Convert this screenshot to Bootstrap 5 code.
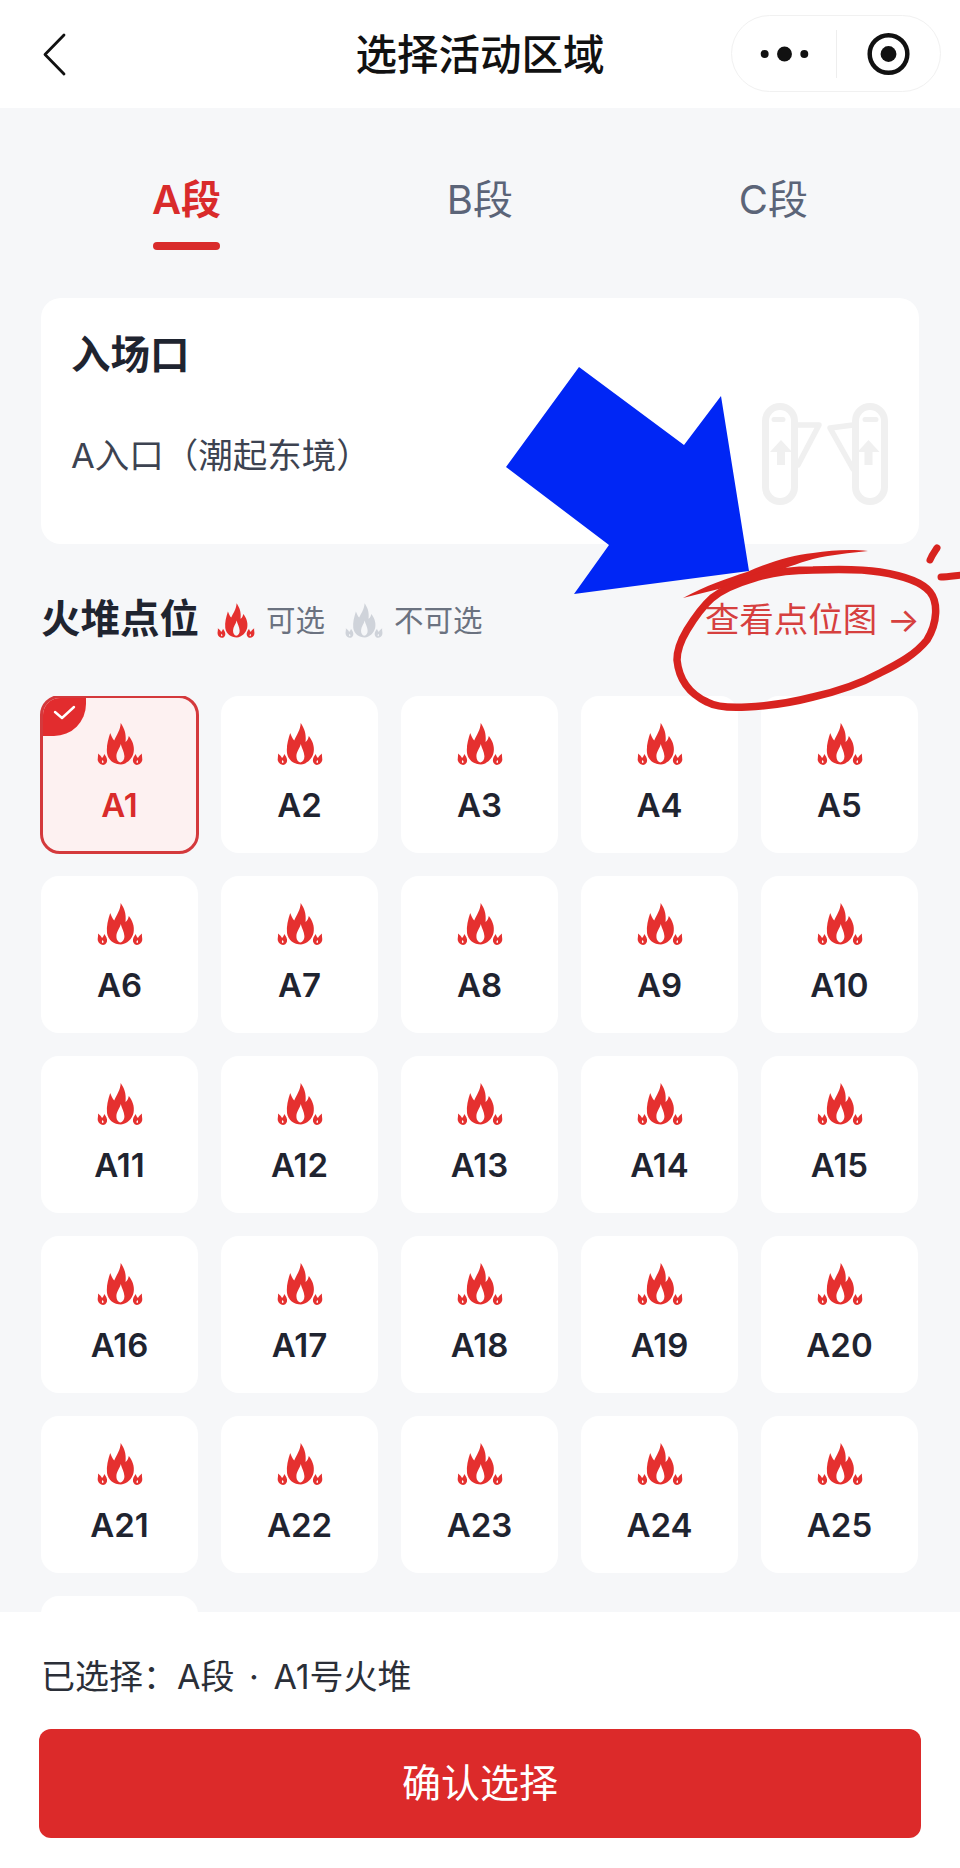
<!DOCTYPE html>
<html lang="zh-CN">
<head>
  <meta charset="UTF-8" />
  <meta name="viewport" content="width=device-width, initial-scale=1.0" />
  <title>选择活动区域</title>
  <link href="https://cdn.jsdelivr.net/npm/bootstrap@5.3.3/dist/css/bootstrap.min.css" rel="stylesheet" />
  <style>
    body {
      height: 1868px;
      overflow: hidden;
      background: #f6f7f9;
      font-family: Inter, "Noto Sans CJK SC", sans-serif;
      color: #1f2430;
    }

    /* Top bar */
    .top-bar { height: 108px; background: #fff; padding: 0 19px; }
    .top-side { flex: 1 1 0; }
    .back-icon { margin-left: 24px; }
    .top-title { margin-top: 3px; font-size: 41.5px; font-weight: 500; color: #111; line-height: 1; }
    .capsule {
      width: 210px;
      height: 77px;
      margin-top: -1px;
      border: 1px solid #f1f1f1;
      border-radius: 39px;
    }
    .capsule-line { width: 1px; height: 48px; background: #eee; }

    /* Tabs */
    .seg-tabs { padding: 62px 39px 0; }
    .seg-tabs .nav-link {
      display: inline-block;
      padding: 0;
      font-size: 40px;
      line-height: 60px;
      color: #5b6478;
    }
    .seg-tabs .nav-link.active { color: #d92b2b; font-weight: 600; }
    .seg-tabs .nav-link.active::after {
      content: "";
      display: block;
      width: 67px;
      height: 8px;
      margin: 12px auto 0;
      border-radius: 4px;
      background: #d92b2b;
    }
    .seg-tabs .nav-item { height: 80px; }

    /* Entrance card */
    .gate-card {
      height: 246px;
      margin: 48px 41px 0;
      padding: 30px 31px 39px 30px;
      background: #fff;
      border: 0;
      border-radius: 20px;
    }
    .gate-title { font-size: 39.5px; font-weight: 700; line-height: 54px; color: #1f2430; }
    .gate-name { margin-top: 50px; font-size: 34.5px; line-height: 48px; color: #3d4351; }

    /* Legend row */
    .legend-row { height: 60px; margin: 46px 41px 0; }
    .legend-title { font-size: 39.5px; font-weight: 700; color: #1f2430; margin-right: 18px; }
    .legend-text { font-size: 29.5px; color: #6b7280; margin-left: 11px; margin-right: 20px; }
    .map-link { margin-right: -1px; font-size: 34.5px; font-weight: 400; color: #d6403f; text-decoration: none; }

    /* Grid */
    .fire-wrap { height: 916px; margin-top: 46px; overflow: hidden; }
    .fire-grid {
      grid-template-columns: repeat(5, 157px);
      grid-auto-rows: 157px;
      gap: 23px;
      padding: 0 41px;
    }
    .fire-cell {
      position: relative;
      padding-top: 27px;
      background: #fff;
      border-radius: 18px;
      overflow: hidden;
      text-align: center;
      font-size: 33px;
      font-weight: 600;
      line-height: 1;
    }
    .fire-cell svg.flame { display: block; margin: 0 auto 24px; }
    .fire-cell .flame { color: #e5302f; }
    .fire-cell.picked {
      margin: -1px;
      padding-top: 25px;
      background: #fdf1f1;
      border: 3px solid #d4393c;
      border-radius: 20px;
      color: #d92b2b;
    }
    .pick-tag {
      position: absolute;
      top: -1px;
      left: -1px;
      width: 44px;
      height: 39px;
      background: #e22c2e;
      border-bottom-right-radius: 32px;
    }
    .legend-on { color: #e5302f; }
    .legend-off { color: #cfd3da; }

    /* Bottom bar */
    .bottom-bar { height: 256px; padding: 41px 39px 0; background: #fff; }
    .picked-text { margin-left: 2px; font-size: 34px; line-height: 48px; color: #2b2f38; }
    .dot-gap { margin: 0 5px; }
    .confirm-btn {
      height: 109px;
      margin-top: 28px;
      border: 0;
      border-radius: 12px;
      background: #dc2a2a;
      color: #fff;
      font-size: 39px;
    }

    /* Markup drawn over the screenshot */
    .markup { position: absolute; top: 0; left: 0; pointer-events: none; }
  </style>
</head>
<body class="position-relative">
  <svg width="0" height="0" class="d-block">
    <symbol id="flame-icon" viewBox="0 0 46 42">
      <path fill="currentColor" fill-rule="evenodd" d="M23.7 0C27 5 29.5 10 28.5 19C30.5 17.5 31.5 15 31.8 13C35 17 38 23 36.5 30C35 36 30 41 24 41.5C17 41.5 11 37 10 30C9.3 23 11 17 13.2 10C14.5 13 15.5 15.5 17.2 17.5C19.5 12 23.5 7 23.7 0ZM23.8 21C23 25 19.6 28.5 19.4 33C19.3 36.4 21 39 23.3 39.4C25.8 39 27.6 36.2 27.4 33C27.1 28.5 24.6 25 23.8 21Z"/>
      <g id="flame-side">
        <path fill="currentColor" fill-rule="evenodd" d="M1 30.5C3 32 4.5 33.5 5 35C6 34 7 32.5 7.2 31C9 33 10.5 36 10 38.5C9.3 41 7.5 42 6 42C3.5 41.5 1.5 40 0.8 37.5C0.3 35.5 1.5 33 1 30.5ZM5.5 37C4.8 38.2 4.6 39.5 5.6 40C6.8 39.8 7 38.5 5.5 37Z"/>
      </g>
      <use href="#flame-side" transform="matrix(-1 0 0 1 46 0)"/>
    </symbol>
  </svg>

  <!-- Header -->
  <header class="top-bar d-flex align-items-center">
    <div class="top-side">
      <svg width="23" height="43" viewBox="0 0 23 43" class="d-block back-icon">
        <path d="M21 2L2 21.5L21 41" fill="none" stroke="#111" stroke-width="2.8" stroke-linecap="round" stroke-linejoin="round"/>
      </svg>
    </div>
    <div class="top-title">选择活动区域</div>
    <div class="top-side d-flex justify-content-end">
      <div class="capsule d-flex align-items-center">
        <svg width="105" height="20" viewBox="0 0 105 20" class="d-block">
          <circle cx="33" cy="10" r="4" fill="#111"/>
          <circle cx="53" cy="10" r="7.5" fill="#111"/>
          <circle cx="73" cy="10" r="4" fill="#111"/>
        </svg>
        <span class="capsule-line"></span>
        <svg width="104" height="44" viewBox="0 0 104 44" class="d-block">
          <circle cx="52" cy="22" r="19" fill="none" stroke="#111" stroke-width="4.5"/>
          <circle cx="52" cy="22" r="8" fill="#111"/>
        </svg>
      </div>
    </div>
  </header>

  <!-- Section tabs -->
  <ul class="nav nav-fill seg-tabs">
    <li class="nav-item"><a class="nav-link active" href="#">A段</a></li>
    <li class="nav-item"><a class="nav-link" href="#">B段</a></li>
    <li class="nav-item"><a class="nav-link" href="#">C段</a></li>
  </ul>

  <!-- Entrance -->
  <div class="card gate-card flex-row justify-content-between">
    <div>
      <div class="gate-title">入场口</div>
      <div class="gate-name">A入口（潮起东境）</div>
    </div>
    <svg width="126" height="102" viewBox="0 0 126 102" class="align-self-end d-block" fill="none" stroke="#f0f0f0" stroke-width="7" stroke-linejoin="round" stroke-linecap="round">
      <rect x="3.5" y="3.5" width="29" height="95" rx="14.5"/>
      <rect x="93.5" y="3.5" width="29" height="95" rx="14.5"/>
      <path d="M12 16.5H21M103 16.5H114" stroke-width="5"/>
      <path d="M34 22H57L36 62M91 22L68 25L91 66" stroke-width="5.5"/>
      <path fill="#f0f0f0" stroke="none" d="M19 37L30 49H23V62H15V49H8ZM106.5 37L117.5 49H110.5V62H102.5V49H95.5Z"/>
    </svg>
  </div>

  <!-- Legend -->
  <div class="legend-row d-flex align-items-center">
    <span class="legend-title">火堆点位</span>
    <svg width="38" height="35" class="flame d-block legend-on"><use href="#flame-icon"/></svg>
    <span class="legend-text">可选</span>
    <svg width="38" height="35" class="flame d-block legend-off"><use href="#flame-icon"/></svg>
    <span class="legend-text">不可选</span>
    <a class="map-link ms-auto" href="#">查看点位图 →</a>
  </div>

  <!-- Fire pit grid, filled by the script below -->
  <div class="fire-wrap">
    <div class="d-grid fire-grid" id="fireGrid"></div>
  </div>

  <!-- Bottom bar -->
  <footer class="bottom-bar">
    <div class="picked-text">已选择：A段<span class="dot-gap"> · </span>A1号火堆</div>
    <button type="button" class="btn w-100 d-block confirm-btn">确认选择</button>
  </footer>

  <!-- Blue arrow and red hand-drawn ring on top of the page -->
  <svg class="markup" width="960" height="1868" viewBox="0 0 960 1868" fill="none">
    <polygon fill="#0026f5" points="579,367 684,445 721,396 749,571 574,594 609,545 506,467"/>
    <path fill="#d8231f" d="M683 598C705 586 728 578 747 572C770 562 792 555 813 553C832 550 852 549 868 551C850 553 830 555 813 559C795 564 775 572 752 581C728 587 705 592 683 598Z"/>
    <path stroke="#d8231f" stroke-width="7.5" stroke-linecap="round" d="M752 579C772 572 792 570 813 570C840 569 862 569 880 572C905 576 922 582 930 592C938 602 938 622 927 640C915 655 898 664 880 673C858 685 835 692 813 697C790 703 768 706 747 707C730 708 716 707 707 702C690 694 679 680 677 660C677 650 681 640 687 630C695 617 703 606 712 598C722 590 735 584 752 579"/>
    <path stroke="#d8231f" stroke-width="7" stroke-linecap="round" d="M930 560C932 555 935 551 937 548"/>
    <path stroke="#d8231f" stroke-width="7" stroke-linecap="round" d="M941 577C947 577 953 576 962 575"/>
  </svg>

  <script src="https://cdn.jsdelivr.net/npm/bootstrap@5.3.3/dist/js/bootstrap.bundle.min.js"></script>
  <script>
    // Build the A1..A25 cells, plus the empty top edge of the next one that peeks out above the bottom bar
    const grid = document.getElementById('fireGrid');
    for (let i = 1; i <= 26; i++) {
      const cell = document.createElement('div');
      cell.className = 'fire-cell' + (i === 1 ? ' picked' : '');
      if (i <= 25) {
        cell.innerHTML =
          (i === 1 ? '<span class="pick-tag"><svg width="44" height="39" viewBox="0 0 44 39" class="d-block"><path d="M13 15L20 21L32 10" fill="none" stroke="#fff" stroke-width="2.4" stroke-linecap="round" stroke-linejoin="round"/></svg></span>' : '') +
          '<svg width="46" height="42" class="flame"><use href="#flame-icon"/></svg>A' + i;
      }
      grid.appendChild(cell);
    }
  </script>
</body>
</html>
